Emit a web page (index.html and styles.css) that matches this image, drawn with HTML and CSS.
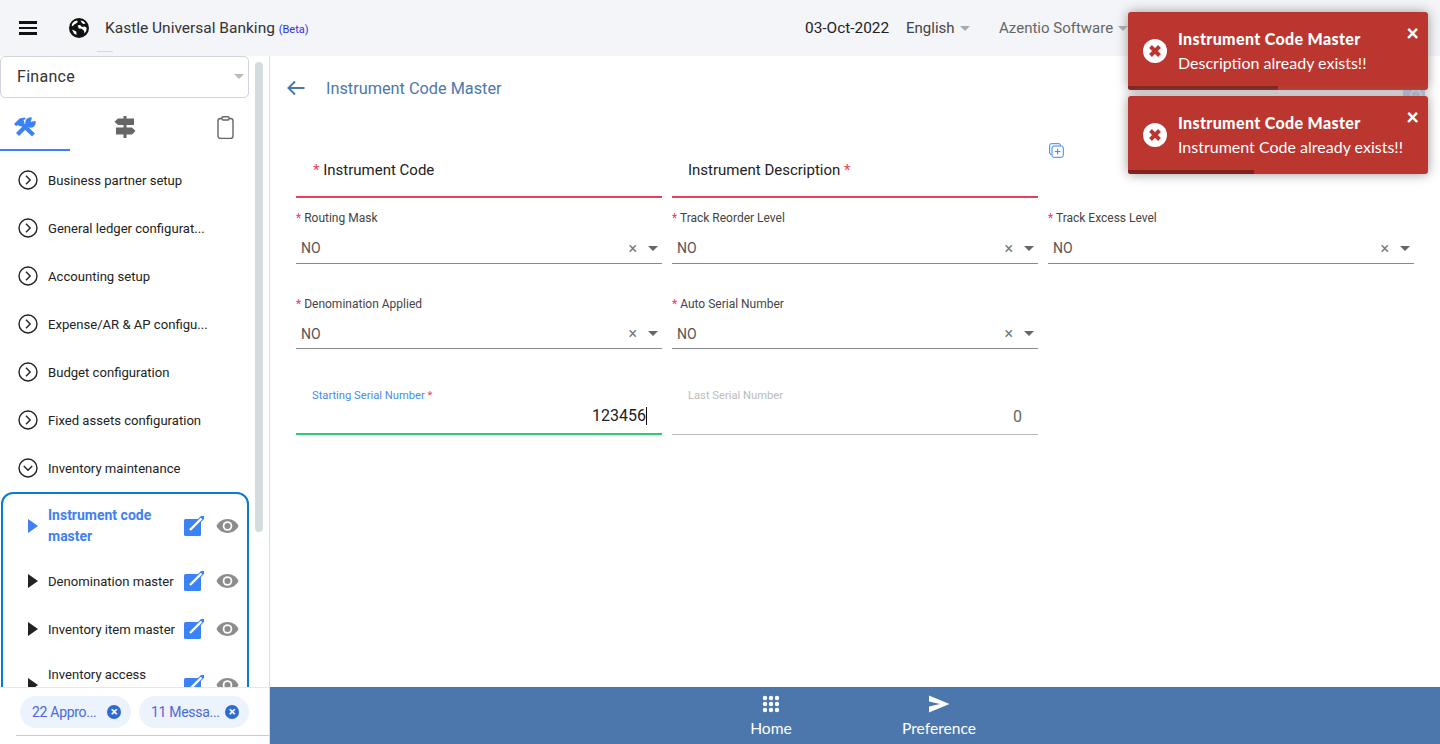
FILE: index.html
```html
<!doctype html>
<html>
    <head>
        <title>Instrument Code Master</title>
        <link rel="stylesheet" href="styles.css">
    </head>
    <body>
        <header class="topbar">
            <div class="menu-btn"><span></span><span></span><span></span></div>
            <svg class="globe" viewBox="0 0 20 20">
                <circle cx="10" cy="10" r="10" fill="#111"/>
                <path fill="#fff" d="M5.500 3.200 8 2.600 8.800 4 7 5.600 5.200 6.400 3.800 8.200 2.600 7.600 3.600 5zM11.500 2.400 14.500 3.200 16.600 5.400 14.200 6 12.600 4.600zM8.600 7.400 11 7 13 9 15.600 8.600 17.600 9.800 17.400 12.600 15.600 15.400 14.800 12.400 12.600 10.800 9.800 10.400zM3 11.400 5.600 12.800 7.400 13.800 7.400 17 5 15.400z"/>
            </svg>
            <div class="brand">Kastle Universal Banking <small>(Beta)</small></div>
            <div class="top-right">
                <span class="date">03-Oct-2022</span>
                <span class="lang">English<i class="caret"></i></span>
                <span class="org">Azentio Software<i class="caret"></i></span>
            </div>
            <div class="tick"></div>
        </header>

        <div class="layout">
            <aside class="sidebar">
                <div class="side-scroll">
                    <div class="side-body">
                        <div class="module-select">Finance<i class="caret"></i></div>
                        <div class="tabs">
                            <div class="tab active">
                                <svg width="24" height="22" viewBox="0 0 24 22" fill="#3b82f6">
                                    <path d="M8 7 20.500 19" stroke="#3b82f6" stroke-width="4.200"/>
                                    <path d="M1 8 6.500 2.500 11.500 1.500 13 3 10.500 4 11.500 6.500 7 10.500 5 9 3 10z"/>
                                    <path d="M4.500 18.500 15 8" stroke="#3b82f6" stroke-width="4.200"/>
                                    <circle cx="17.500" cy="6.500" r="5.200"/>
                                    <path d="M17.500 6 19.500 .5 24 .5 23.500 4.500z" fill="#fff"/>
                                </svg>
                            </div>
                            <div class="tab">
                                <svg width="22" height="22" viewBox="0 0 22 22" fill="#666">
                                    <rect x="9.500" y="0" width="3" height="22"/>
                                    <path d="M4 2.500H20V9H4L.5 5.750z"/>
                                    <path d="M2 11.500H18L21.500 15 18 18.500H2z"/>
                                </svg>
                            </div>
                            <div class="tab">
                                <svg width="18" height="23" viewBox="0 0 18 23" fill="none" stroke="#666" stroke-width="1.400">
                                    <rect x="1" y="2.500" width="15" height="20" rx="2.500"/>
                                    <rect x="5" y=".7" width="7" height="3.300" rx="1" fill="#fff"/>
                                </svg>
                            </div>
                        </div>

                        <ul class="menu">
                            <li><svg class="chev" viewBox="0 0 20 20"><circle cx="10" cy="10" r="9"/><path d="M8 5.800 12.200 10 8 14.200"/></svg>Business partner setup</li>
                            <li><svg class="chev" viewBox="0 0 20 20"><circle cx="10" cy="10" r="9"/><path d="M8 5.800 12.200 10 8 14.200"/></svg>General ledger configurat...</li>
                            <li><svg class="chev" viewBox="0 0 20 20"><circle cx="10" cy="10" r="9"/><path d="M8 5.800 12.200 10 8 14.200"/></svg>Accounting setup</li>
                            <li><svg class="chev" viewBox="0 0 20 20"><circle cx="10" cy="10" r="9"/><path d="M8 5.800 12.200 10 8 14.200"/></svg>Expense/AR &amp; AP configu...</li>
                            <li><svg class="chev" viewBox="0 0 20 20"><circle cx="10" cy="10" r="9"/><path d="M8 5.800 12.200 10 8 14.200"/></svg>Budget configuration</li>
                            <li><svg class="chev" viewBox="0 0 20 20"><circle cx="10" cy="10" r="9"/><path d="M8 5.800 12.200 10 8 14.200"/></svg>Fixed assets configuration</li>
                            <li><svg class="chev" viewBox="0 0 20 20"><circle cx="10" cy="10" r="9"/><path d="M5.800 8 10 12.200 14.200 8"/></svg>Inventory maintenance</li>
                        </ul>

                        <div class="submenu">
                            <div class="sub-row current">
                                <i class="arrow"></i>
                                <span class="sub-name">Instrument code master</span>
                                <svg class="edit" viewBox="0 0 20 20"><rect y="3" width="17" height="17" rx="1.500" fill="#3b82f6"/><path d="M6 14 18.500 1.500" stroke="#3b82f6" stroke-width="4.200" stroke-linecap="round"/><path d="M6 14 17.500 2.500" stroke="#fff" stroke-width="2.400"/></svg>
                                <svg class="eye" viewBox="0 0 24 16"><path fill="#8c8c8c" d="M12 .8C6.500 .8 2.500 4 .5 8 2.500 12 6.500 15.200 12 15.200S21.500 12 23.500 8C21.500 4 17.500 .8 12 .8z"/><circle cx="12" cy="8" r="5" fill="#fff"/><circle cx="12" cy="8" r="3.200" fill="#8c8c8c"/></svg>
                            </div>
                            <div class="sub-row">
                                <i class="arrow"></i>
                                <span class="sub-name">Denomination master</span>
                                <svg class="edit" viewBox="0 0 20 20"><rect y="3" width="17" height="17" rx="1.500" fill="#3b82f6"/><path d="M6 14 18.500 1.500" stroke="#3b82f6" stroke-width="4.200" stroke-linecap="round"/><path d="M6 14 17.500 2.500" stroke="#fff" stroke-width="2.400"/></svg>
                                <svg class="eye" viewBox="0 0 24 16"><path fill="#8c8c8c" d="M12 .8C6.500 .8 2.500 4 .5 8 2.500 12 6.500 15.200 12 15.200S21.500 12 23.500 8C21.500 4 17.500 .8 12 .8z"/><circle cx="12" cy="8" r="5" fill="#fff"/><circle cx="12" cy="8" r="3.200" fill="#8c8c8c"/></svg>
                            </div>
                            <div class="sub-row">
                                <i class="arrow"></i>
                                <span class="sub-name">Inventory item master</span>
                                <svg class="edit" viewBox="0 0 20 20"><rect y="3" width="17" height="17" rx="1.500" fill="#3b82f6"/><path d="M6 14 18.500 1.500" stroke="#3b82f6" stroke-width="4.200" stroke-linecap="round"/><path d="M6 14 17.500 2.500" stroke="#fff" stroke-width="2.400"/></svg>
                                <svg class="eye" viewBox="0 0 24 16"><path fill="#8c8c8c" d="M12 .8C6.500 .8 2.500 4 .5 8 2.500 12 6.500 15.200 12 15.200S21.500 12 23.500 8C21.500 4 17.500 .8 12 .8z"/><circle cx="12" cy="8" r="5" fill="#fff"/><circle cx="12" cy="8" r="3.200" fill="#8c8c8c"/></svg>
                            </div>
                            <div class="sub-row">
                                <i class="arrow"></i>
                                <span class="sub-name two-line">Inventory access</span>
                                <svg class="edit" viewBox="0 0 20 20"><rect y="3" width="17" height="17" rx="1.500" fill="#3b82f6"/><path d="M6 14 18.500 1.500" stroke="#3b82f6" stroke-width="4.200" stroke-linecap="round"/><path d="M6 14 17.500 2.500" stroke="#fff" stroke-width="2.400"/></svg>
                                <svg class="eye" viewBox="0 0 24 16"><path fill="#8c8c8c" d="M12 .8C6.500 .8 2.500 4 .5 8 2.500 12 6.500 15.200 12 15.200S21.500 12 23.500 8C21.500 4 17.500 .8 12 .8z"/><circle cx="12" cy="8" r="5" fill="#fff"/><circle cx="12" cy="8" r="3.200" fill="#8c8c8c"/></svg>
                            </div>
                        </div>
                    </div>
                    <div class="scrollbar"></div>
                </div>
                <div class="chips">
                    <div class="chip">22 Appro...<i class="chip-x">&times;</i></div>
                    <div class="chip">11 Messa...<i class="chip-x">&times;</i></div>
                </div>
            </aside>

            <div class="main">
                <div class="content">
                    <div class="page-head">
                        <svg class="back" width="18" height="16" viewBox="0 0 18 16" fill="none" stroke="#4c78ac" stroke-width="2"><path d="M17.500 8H1.500M8 1.500 1.500 8 8 14.500"/></svg>
                        <span class="page-title">Instrument Code Master</span>
                    </div>

                    <div class="form-grid">
                        <div class="big-field"><b>*</b> Instrument Code</div>
                        <div class="big-field">Instrument Description <b>*</b></div>
                        <div class="copy-cell">
                            <svg width="15" height="15" viewBox="0 0 15 15" fill="none" stroke="#3b82f6" stroke-width="1"><path d="M2.500 11.500H2A1.500 1.500 0 0 1 .7 10V2.200A1.500 1.500 0 0 1 2.200 .7H10A1.500 1.500 0 0 1 11.500 2V2.500"/><rect x="3" y="3" width="11.300" height="11.300" rx="2"/><path d="M8.600 5.800V11.500M5.800 8.600H11.500"/></svg>
                        </div>

                        <div class="sel-field"><label><b>*</b> Routing Mask</label><div class="sel">NO<span class="sel-x">&times;</span><i class="caret"></i></div></div>
                        <div class="sel-field"><label><b>*</b> Track Reorder Level</label><div class="sel">NO<span class="sel-x">&times;</span><i class="caret"></i></div></div>
                        <div class="sel-field"><label><b>*</b> Track Excess Level</label><div class="sel">NO<span class="sel-x">&times;</span><i class="caret"></i></div></div>

                        <div class="sel-field lower"><label><b>*</b> Denomination Applied</label><div class="sel">NO<span class="sel-x">&times;</span><i class="caret"></i></div></div>
                        <div class="sel-field lower"><label><b>*</b> Auto Serial Number</label><div class="sel">NO<span class="sel-x">&times;</span><i class="caret"></i></div></div>
                        <div></div>

                        <div class="num-field focus"><label>Starting Serial Number <b>*</b></label><div class="num">123456<i class="cursor"></i></div></div>
                        <div class="num-field off"><label>Last Serial Number</label><div class="num">0</div></div>
                    </div>
                </div>
                <footer class="bottom">
                    <div class="bottom-item">
                        <svg width="18" height="18" viewBox="0 0 18 18" fill="#fff">
                            <circle cx="3" cy="3" r="2.200"/><circle cx="9" cy="3" r="2.200"/><circle cx="15" cy="3" r="2.200"/>
                            <circle cx="3" cy="9" r="2.200"/><circle cx="9" cy="9" r="2.200"/><circle cx="15" cy="9" r="2.200"/>
                            <circle cx="3" cy="15" r="2.200"/><circle cx="9" cy="15" r="2.200"/><circle cx="15" cy="15" r="2.200"/>
                        </svg>
                        Home
                    </div>
                    <div class="bottom-item">
                        <svg width="22" height="18" viewBox="0 0 22 18" fill="#fff"><path d="M1 .5 21.500 9 1 17.500V11.500L12 9 1 6.500z"/></svg>
                        Preference
                    </div>
                </footer>
            </div>
        </div>

        <div class="hidden-btn"></div>

        <div class="toasts">
            <div class="toast">
                <svg class="toast-icon" viewBox="0 0 24 24"><circle cx="12" cy="12" r="12" fill="#fff"/><path d="M7.500 7.500 16.500 16.500M16.500 7.500 7.500 16.500" stroke="#bb362f" stroke-width="4"/></svg>
                <div>
                    <div class="toast-title">Instrument Code Master</div>
                    <div class="toast-msg">Description already exists!!</div>
                </div>
                <span class="toast-close">&times;</span>
                <div class="toast-bar" style="width: 150px"></div>
            </div>
            <div class="toast">
                <svg class="toast-icon" viewBox="0 0 24 24"><circle cx="12" cy="12" r="12" fill="#fff"/><path d="M7.500 7.500 16.500 16.500M16.500 7.500 7.500 16.500" stroke="#bb362f" stroke-width="4"/></svg>
                <div>
                    <div class="toast-title">Instrument Code Master</div>
                    <div class="toast-msg">Instrument Code already exists!!</div>
                </div>
                <span class="toast-close">&times;</span>
                <div class="toast-bar" style="width: 126px"></div>
            </div>
        </div>
    </body>
</html>
```

FILE: styles.css
```css
* {
    box-sizing: border-box;
}
body {
    margin: 0;
    height: 744px;
    overflow: hidden;
    background: #fff;
    color: #222;
    font-family: 'Roboto', sans-serif;
    display: flex;
    flex-direction: column;
}
i {
    font-style: normal;
}
.caret {
    display: inline-block;
    width: 0;
    height: 0;
    border-left: 5px solid transparent;
    border-right: 5px solid transparent;
    border-top: 5px solid #aaa;
}

/* top bar */
.topbar {
    position: relative;
    height: 56px;
    flex: none;
    background: #f3f5f9;
    display: flex;
    align-items: center;
    padding-left: 19px;
}
.menu-btn {
    width: 18px;
    display: flex;
    flex-direction: column;
    gap: 3px;
}
.menu-btn span {
    height: 2.500px;
    background: #111;
}
.globe {
    width: 20px;
    height: 20px;
    margin-left: 32px;
}
.brand {
    width: 205px;
    flex: none;
    margin-left: 16px;
    font-size: 15.500px;
    color: #333;
    white-space: nowrap;
}
.brand small {
    font-size: 11px;
    color: #2f2ff5;
}
.top-right {
    margin-left: 495px;
    display: flex;
    font-size: 15px;
    white-space: nowrap;
}
.date {
    width: 101px;
    font-size: 15.400px;
}
.lang {
    width: 93px;
    color: #444;
}
.lang .caret, .org .caret {
    margin-left: 5px;
    vertical-align: 2px;
}
.org {
    color: #666;
}
.tick {
    position: absolute;
    left: 97px;
    bottom: 4px;
    width: 16px;
    height: 1px;
    background: #d6d8dc;
}

.layout {
    flex: 1;
    min-height: 0;
    display: flex;
}

/* left side */
.sidebar {
    width: 270px;
    flex: none;
    display: flex;
    flex-direction: column;
    border-right: 1px solid #dcdcdc;
}
.side-scroll {
    flex: 1;
    min-height: 0;
    display: flex;
    overflow: hidden;
}
.side-body {
    width: 249px;
    flex: none;
}
.scrollbar {
    width: 8px;
    height: 470px;
    margin: 6px 0 0 6px;
    border-radius: 4px;
    background: #d3dde0;
}
.module-select {
    height: 42px;
    border: 1px solid #d0d4dc;
    border-radius: 5px;
    padding: 0 0 2px 16px;
    font-size: 16px;
    letter-spacing: .3px;
    color: #333;
    display: flex;
    justify-content: space-between;
    align-items: center;
}
.module-select .caret {
    margin-right: 4px;
    border-top-color: #bbb;
}
.tabs {
    height: 53px;
    display: flex;
}
.tab {
    padding-top: 18px;
}
.tab.active {
    width: 70px;
    padding-left: 13px;
    border-bottom: 2px solid #3b82f6;
}
.tab:nth-child(2) {
    margin-left: 44px;
}
.tab:nth-child(3) {
    margin-left: 81px;
}
.menu {
    list-style: none;
    margin: 5px 0 0;
    padding: 0 0 0 18px;
    font-size: 13.100px;
    color: #222;
}
.menu li {
    height: 48px;
    display: flex;
    align-items: center;
    gap: 10px;
    white-space: nowrap;
}
.chev {
    width: 20px;
    height: 20px;
    fill: none;
    stroke: #222;
    stroke-width: 1.400;
}
.submenu {
    margin: 0 0 0 1px;
    height: 300px;
    border: 2px solid #0b7ad0;
    border-radius: 12px;
    padding-top: 11px;
}
.sub-row {
    display: flex;
    align-items: center;
    font-size: 13.100px;
    color: #222;
    line-height: 21px;
    height: 48px;
}
.sub-row.current {
    height: 42px;
    margin-bottom: 10px;
    font-size: 14px;
    font-weight: 700;
    color: #3f80f5;
}
.sub-row:nth-child(4) {
    margin-top: 8px;
}
.arrow {
    width: 0;
    height: 0;
    margin-left: 25px;
    border-left: 10px solid #222;
    border-top: 7.500px solid transparent;
    border-bottom: 7.500px solid transparent;
}
.current .arrow {
    border-left-color: #3f80f5;
}
.sub-name {
    width: 136px;
    margin-left: 10px;
    flex: none;
}
.two-line {
    padding-bottom: 21px;
}
.edit {
    width: 20px;
    height: 20px;
    flex: none;
    margin-top: -1px;
}
.eye {
    width: 23px;
    height: 16px;
    flex: none;
    margin: -1px 0 0 12px;
}
.chips {
    height: 57px;
    flex: none;
    background: #fff;
    border-top: 1px solid #e8e8e8;
    padding: 8px 0 0 20px;
    display: flex;
    gap: 8px;
    position: relative;
}
.chips::after {
    content: '';
    position: absolute;
    left: 16px;
    right: 0;
    bottom: 8px;
    height: 1px;
    background: #ccc;
}
.chip {
    width: 111px;
    height: 32px;
    border-radius: 16px;
    background: #edf3fd;
    color: #4a69d8;
    font-size: 14px;
    letter-spacing: -.3px;
    line-height: 32px;
    padding-left: 12px;
    display: flex;
    white-space: nowrap;
}
.chip + .chip {
    width: 110px;
}
.chip-x {
    width: 14px;
    height: 14px;
    margin: 9px 10px 0 auto;
    border-radius: 50%;
    background: #2d6ad6;
    color: #fff;
    font-size: 13px;
    font-weight: 700;
    line-height: 14px;
    text-align: center;
}

/* form */
.main {
    flex: 1;
    min-width: 0;
    display: flex;
    flex-direction: column;
}
.content {
    flex: 1;
    min-height: 0;
    padding: 0 26px;
}
.page-head {
    height: 87px;
    display: flex;
    align-items: center;
    padding: 0 0 23px 0;
}
.back {
    margin-left: -9px;
}
.page-title {
    margin-left: 21px;
    font-size: 16.300px;
    color: #4c78ac;
}
.form-grid {
    display: grid;
    grid-template-columns: 366px 366px 366px;
    column-gap: 10px;
    align-content: start;
}
.form-grid b {
    color: #e8405a;
    font-weight: 400;
}
.big-field {
    height: 55px;
    border-bottom: 2px solid #e8405a;
    padding: 17px 0 0 17px;
    font-size: 15px;
    line-height: 20px;
    color: #222;
}
.big-field:nth-child(2) {
    padding-left: 16px;
}
.copy-cell {
    padding-left: 1px;
}
.sel-field {
    height: 85px;
    padding-top: 13px;
}
.lower {
    padding-top: 14px;
}
.sel-field label, .num-field label {
    display: block;
    font-size: 12px;
    line-height: 14px;
    color: #444;
}
.sel {
    height: 39px;
    border-bottom: 1px solid #8a8a8a;
    padding: 8px 4px 0 5px;
    display: flex;
    align-items: center;
    font-size: 14px;
    color: #555;
}
.lower .sel {
    height: 38px;
}
.sel-x {
    margin-left: auto;
    font-size: 16px;
    color: #777;
}
.sel .caret {
    margin-left: 11px;
    border-top-color: #666;
}
.num-field {
    height: 65px;
    margin-top: 2px;
    padding: 19px 0 0 16px;
    border-bottom: 1px solid #bbb;
}
.num-field label {
    font-size: 11.200px;
}
.focus {
    border-bottom: 2px solid #2ecc71;
    margin-bottom: -1px;
}
.focus label {
    color: #4a8af8;
}
.off label {
    color: #bbb;
}
.num {
    text-align: right;
    padding-right: 16px;
    font-size: 16px;
    line-height: 22px;
    margin-top: 3px;
    color: #444;
}
.off .num {
    color: #666;
}
.focus .num {
    color: #222;
    margin-top: 2px;
    padding-right: 15px;
}
.cursor {
    display: inline-block;
    width: 1px;
    height: 18px;
    background: #111;
    vertical-align: -4px;
}
.bottom {
    height: 57px;
    flex: none;
    background: #4c77ac;
    display: flex;
    justify-content: center;
    color: #fff;
    font-family: 'Lato', sans-serif;
    font-size: 15.600px;
    gap: 78px;
}
.bottom-item {
    width: 90px;
    display: flex;
    flex-direction: column;
    align-items: center;
    gap: 6px;
    padding-top: 8px;
    line-height: 18px;
}

/* overlays */
.hidden-btn {
    position: absolute;
    left: 1403px;
    top: 86px;
    width: 22px;
    height: 12px;
    background: #b4c8f0;
    border-radius: 2px;
}
.hidden-btn::after {
    content: '';
    position: absolute;
    left: 7px;
    top: 3px;
    width: 8px;
    height: 8px;
    border-radius: 50%;
    border: 2px solid #e6ecf8;
}
.toasts {
    position: absolute;
    left: 1128px;
    top: 12px;
    display: flex;
    flex-direction: column;
    gap: 6px;
}
.toast {
    position: relative;
    width: 300px;
    height: 78px;
    background: #bb362f;
    border-radius: 3px;
    box-shadow: 0 0 12px #999;
    color: #fff;
    font-family: 'Lato', sans-serif;
    font-size: 16px;
    display: flex;
    align-items: center;
    padding: 0 15px;
    overflow: hidden;
}
.toast-icon {
    width: 24px;
    height: 24px;
    flex: none;
    margin-right: 11px;
}
.toast-title {
    font-weight: 900;
    letter-spacing: .35px;
    line-height: 24px;
    white-space: nowrap;
}
.toast-msg {
    line-height: 24px;
    white-space: nowrap;
}
.toast-close {
    position: absolute;
    right: 9px;
    top: 10px;
    font-size: 22px;
    font-weight: 900;
    line-height: 22px;
}
.toast-bar {
    position: absolute;
    left: 0;
    bottom: 0;
    height: 4px;
    background: #7f231d;
}
```
